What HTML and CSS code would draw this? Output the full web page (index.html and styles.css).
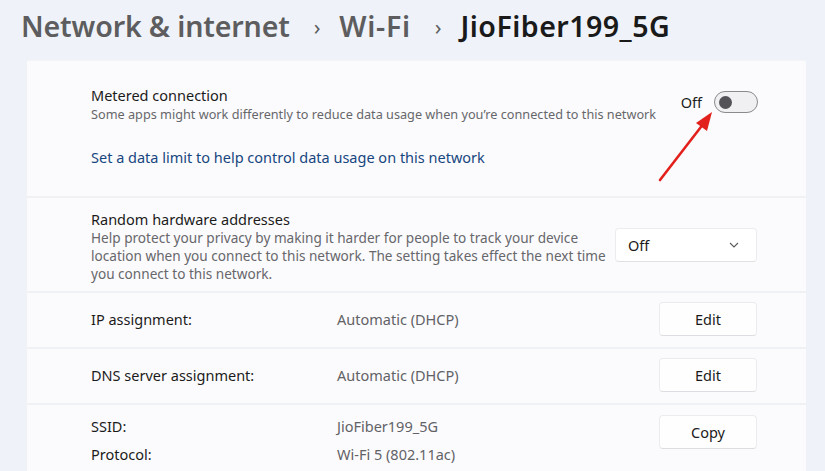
FILE: index.html
```html
<!DOCTYPE html>
<html>
<head>
<meta charset="utf-8">
<link rel="stylesheet" href="styles.css">
</head>
<body>
<header class="crumbs">
  <span class="crumb">Network &amp; internet</span>
  <span class="sep">›</span>
  <span class="crumb wide">Wi-Fi</span>
  <span class="sep">›</span>
  <span class="crumb current">JioFiber199_5G</span>
</header>
<main class="card">
  <section class="row metered">
    <div class="metered-top">
      <div class="text">
        <div class="title">Metered connection</div>
        <div class="desc">Some apps might work differently to reduce data usage when you’re connected to this network</div>
      </div>
      <div class="toggle-wrap">
        <span class="toggle-label">Off</span>
        <span class="toggle"><span class="knob"></span></span>
      </div>
    </div>
    <a class="link">Set a data limit to help control data usage on this network</a>
  </section>
  <section class="row random">
    <div class="text">
      <div class="title">Random hardware addresses</div>
      <div class="desc narrow">Help protect your privacy by making it harder for people to track your device location when you connect to this network. The setting takes effect the next time you connect to this network.</div>
    </div>
    <div class="select">
      <span>Off</span>
      <svg width="12" height="8" viewBox="0 0 12 8"><path d="M2 2 L6 6 L10 2" fill="none" stroke="#5a5a5a" stroke-width="1.1"/></svg>
    </div>
  </section>
  <section class="row prop">
    <div class="label">IP assignment:</div>
    <div class="value">Automatic (DHCP)</div>
    <button class="btn">Edit</button>
  </section>
  <section class="row prop">
    <div class="label">DNS server assignment:</div>
    <div class="value">Automatic (DHCP)</div>
    <button class="btn">Edit</button>
  </section>
  <section class="row props">
    <div class="grid">
      <div class="label">SSID:</div><div class="value">JioFiber199_5G</div>
      <div class="label">Protocol:</div><div class="value">Wi-Fi 5 (802.11ac)</div>
    </div>
    <button class="btn">Copy</button>
  </section>
</main>
<svg class="arrow" width="825" height="471" viewBox="0 0 825 471">
  <line x1="660" y1="180" x2="704" y2="123" stroke="#e3211c" stroke-width="2.6" stroke-linecap="round"/>
  <polygon points="712,112 696,123 707,131" fill="#e3211c"/>
</svg>
</body>
</html>
```
FILE: styles.css
```css
html, body {
  margin: 0;
  padding: 0;
}
body {
  width: 825px;
  height: 471px;
  overflow: hidden;
  background: #eff3f9;
  font-family: "Noto Sans", "Open Sans", sans-serif;
  color: #1b1b1b;
  position: relative;
}
.crumbs {
  box-sizing: border-box;
  height: 60px;
  display: flex;
  align-items: center;
  padding-left: 21px;
  padding-bottom: 9px;
  font-size: 28.6px;
  font-weight: 600;
  color: #5d5d5f;
  letter-spacing: -0.15px;
}
.crumbs .sep {
  font-size: 22px;
  margin: 0 19px 0 24px;
  font-weight: 400;
  color: #5d5d5f;
}
.crumbs .wide {
  letter-spacing: 0.7px;
}
.crumbs .current {
  color: #1a1a1a;
  letter-spacing: 0.45px;
}
.card {
  margin-left: 26px;
  width: 779px;
  background: #fbfbfd;
  border-left: 1px solid #f1f2f5;
}
.row {
  box-sizing: border-box;
  padding-left: 64px;
  padding-right: 48px;
  border-bottom: 2px solid #f0f1f4;
}
.text .title {
  font-size: 14.5px;
  line-height: 20px;
}
.desc {
  font-size: 12.7px;
  line-height: 18px;
  color: #67676b;
}
.random .text {
  flex: none;
  width: 500px;
}
.desc.narrow {
  font-size: 13.6px;
  width: 526px;
}
.metered {
  height: 138px;
  padding-top: 24px;
  border-top: 1px solid #f3f4f6;
}
.metered-top {
  display: flex;
  justify-content: space-between;
  align-items: flex-start;
}
.toggle-wrap {
  display: flex;
  align-items: center;
  margin-top: 6px;
}
.toggle-label {
  font-size: 14.5px;
  margin-right: 12px;
}
.toggle {
  box-sizing: border-box;
  width: 44px;
  height: 22px;
  border: 1px solid #8a8a8e;
  border-radius: 11px;
  background: #f0f0f2;
  display: flex;
  align-items: center;
  padding-left: 4px;
}
.knob {
  width: 13px;
  height: 13px;
  border-radius: 50%;
  background: #545458;
}
.link {
  display: block;
  margin-top: 24px;
  font-size: 14.5px;
  color: #17467f;
}
.random {
  height: 95px;
  display: flex;
  justify-content: space-between;
  align-items: flex-start;
  padding-top: 11px;
}
.select {
  box-sizing: border-box;
  margin-top: 19px;
  margin-right: 1px;
  width: 142px;
  height: 34px;
  background: #fff;
  border: 1px solid #ececee;
  border-bottom-color: #e0e0e3;
  border-radius: 4px;
  display: flex;
  align-items: center;
  justify-content: space-between;
  padding: 0 16px 0 12px;
  font-size: 14.5px;
  flex-shrink: 0;
}
.prop {
  height: 56px;
  display: flex;
  align-items: center;
  padding-bottom: 2px;
}
.label {
  width: 246px;
  font-size: 14.5px;
}
.value {
  flex: 1;
  font-size: 14.5px;
  color: #626266;
}
.btn {
  box-sizing: border-box;
  width: 98px;
  height: 34px;
  margin-right: 1px;
  background: #fefefe;
  border: 1px solid #ececee;
  border-bottom-color: #dedee2;
  border-radius: 4px;
  font-family: inherit;
  font-size: 14.5px;
  color: #1b1b1b;
}
.props {
  height: 80px;
  display: flex;
  align-items: flex-start;
  border-bottom: none;
  padding-top: 10px;
}
.props .btn {
  margin-left: auto;
}
.grid {
  flex: 1;
  margin-top: 1px;
  display: grid;
  grid-template-columns: 246px 1fr;
  row-gap: 8px;
  line-height: 20px;
}
.arrow {
  position: absolute;
  left: 0;
  top: 0;
  pointer-events: none;
}
```
